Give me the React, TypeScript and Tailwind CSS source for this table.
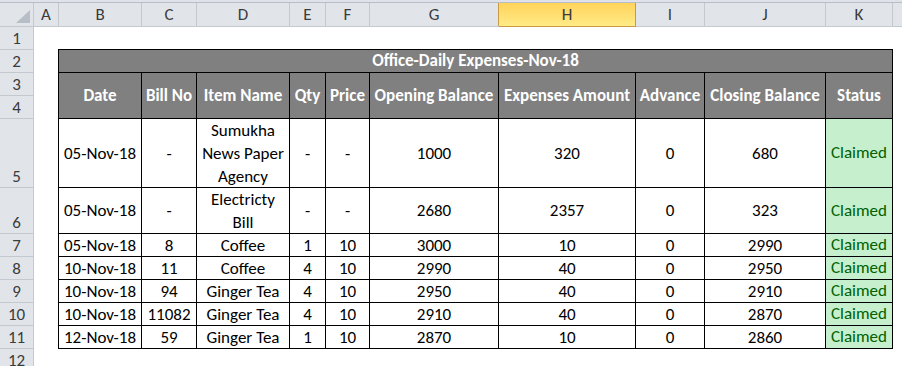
import { memo } from 'react'

const letters = [
    { label: 'A', w: 'w-[25px]', sel: false },
    { label: 'B', w: 'w-[83px]', sel: false },
    { label: 'C', w: 'w-[55px]', sel: false },
    { label: 'D', w: 'w-[93px]', sel: false },
    { label: 'E', w: 'w-[36px]', sel: false },
    { label: 'F', w: 'w-[44px]', sel: false },
    { label: 'G', w: 'w-[129px]', sel: false },
    { label: 'H', w: 'w-[137px]', sel: true },
    { label: 'I', w: 'w-[69px]', sel: false },
    { label: 'J', w: 'w-[121px]', sel: false },
    { label: 'K', w: 'w-[67px]', sel: false }
]

const rowHeads = [
    { n: 1, h: 'h-[23px]' },
    { n: 2, h: 'h-[23px]' },
    { n: 3, h: 'h-[23px]' },
    { n: 4, h: 'h-[23px]' },
    { n: 5, h: 'h-[69px]' },
    { n: 6, h: 'h-[46px]' },
    { n: 7, h: 'h-[23px]' },
    { n: 8, h: 'h-[23px]' },
    { n: 9, h: 'h-[23px]' },
    { n: 10, h: 'h-[23px]' },
    { n: 11, h: 'h-[23px]' },
    { n: 12, h: 'h-[23px]' }
]

// widths of B..K, each one includes its right border
const widths = ['w-[83px]', 'w-[55px]', 'w-[93px]', 'w-[36px]', 'w-[44px]', 'w-[129px]', 'w-[137px]', 'w-[69px]', 'w-[121px]', 'w-[67px]']

const headers = ['Date', 'Bill No', 'Item Name', 'Qty', 'Price', 'Opening Balance', 'Expenses Amount', 'Advance', 'Closing Balance', 'Status']

const expenses = [
    { h: 'h-[69px]', cells: ['05-Nov-18', '-', 'Sumukha\nNews Paper\nAgency', '-', '-', '1000', '320', '0', '680'] },
    { h: 'h-[46px]', cells: ['05-Nov-18', '-', 'Electricty\nBill', '-', '-', '2680', '2357', '0', '323'] },
    { h: 'h-[23px]', cells: ['05-Nov-18', '8', 'Coffee', '1', '10', '3000', '10', '0', '2990'] },
    { h: 'h-[23px]', cells: ['10-Nov-18', '11', 'Coffee', '4', '10', '2990', '40', '0', '2950'] },
    { h: 'h-[23px]', cells: ['10-Nov-18', '94', 'Ginger Tea', '4', '10', '2950', '40', '0', '2910'] },
    { h: 'h-[23px]', cells: ['10-Nov-18', '11082', 'Ginger Tea', '4', '10', '2910', '40', '0', '2870'] },
    { h: 'h-[23px]', cells: ['12-Nov-18', '59', 'Ginger Tea', '1', '10', '2870', '10', '0', '2860'] }
]

function SheetComponent() {
    return (
        <div
            className="w-[902px] h-[366px] overflow-hidden bg-white text-[17px] text-black"
            style={{ fontFamily: 'Calibri, Carlito, Lato, "Open Sans", sans-serif' }}
        >
            <div className="h-[3px] bg-[#dfe3e9] border-b border-[#b7bec8]" />

            {/* column letters */}
            <div className="flex h-[24px] bg-[#e1e5ea] border-b border-[#c4c9d0] text-[17px] text-[#3b3b3b]">
                <div className="w-[34px] shrink-0 border-r border-[#c4c9d0] flex items-end justify-end pr-[3px] pb-[3px]">
                    <svg width="14" height="13" viewBox="0 0 14 13">
                        <polygon points="14,0 14,13 0,13" fill="#b8bec7" />
                    </svg>
                </div>
                {letters.map(col => (
                    <div
                        key={col.label}
                        className={`${col.w} shrink-0 flex items-center justify-center border-r ${
                            col.sel
                                ? 'bg-gradient-to-b from-[#ffd35a] to-[#ffeb86] border-[#c99a45] -mb-px border-b'
                                : col.label === 'G'
                                  ? 'border-[#c99a45]'
                                  : 'border-[#c4c9d0]'
                        }`}
                    >
                        {col.label}
                    </div>
                ))}
                <div className="flex-1" />
            </div>

            <div className="flex">
                {/* row numbers */}
                <div className="w-[34px] shrink-0 bg-[#e1e5ea] border-r border-[#c4c9d0] text-[17px] text-[#3b3b3b]">
                    {rowHeads.map(r => (
                        <div key={r.n} className={`${r.h} border-b border-[#c4c9d0] flex items-end justify-center leading-[21px]`}>
                            {r.n}
                        </div>
                    ))}
                </div>

                {/* sheet area: column A and row 1 stay empty */}
                <div className="pl-[24px] pt-[22px]">
                    <div className="border-l border-t border-black">
                        <div className="h-[23px] w-[834px] bg-[#808080] border-r border-b border-black flex items-center justify-center font-bold text-white">
                            Office-Daily Expenses-Nov-18
                        </div>
                        <div className="flex h-[46px]">
                            {headers.map((t, i) => (
                                <div
                                    key={t}
                                    className={`${widths[i]} shrink-0 bg-[#808080] border-r border-b border-black flex items-center justify-center font-bold text-white whitespace-nowrap`}
                                >
                                    {t}
                                </div>
                            ))}
                        </div>
                        {expenses.map((row, r) => (
                            <div key={r} className={`flex ${row.h}`}>
                                {row.cells.map((c, i) => (
                                    <div
                                        key={i}
                                        className={`${widths[i]} shrink-0 border-r border-b border-black flex items-center justify-center text-center whitespace-pre-line leading-[23px]`}
                                    >
                                        {c}
                                    </div>
                                ))}
                                <div className="w-[67px] shrink-0 border-r border-b border-black bg-[#c6efce] text-[#006100] flex items-center justify-center">
                                    Claimed
                                </div>
                            </div>
                        ))}
                    </div>
                </div>
            </div>
        </div>
    )
}

const Sheet = memo(SheetComponent)

export default function App() {
    return <Sheet />
}
